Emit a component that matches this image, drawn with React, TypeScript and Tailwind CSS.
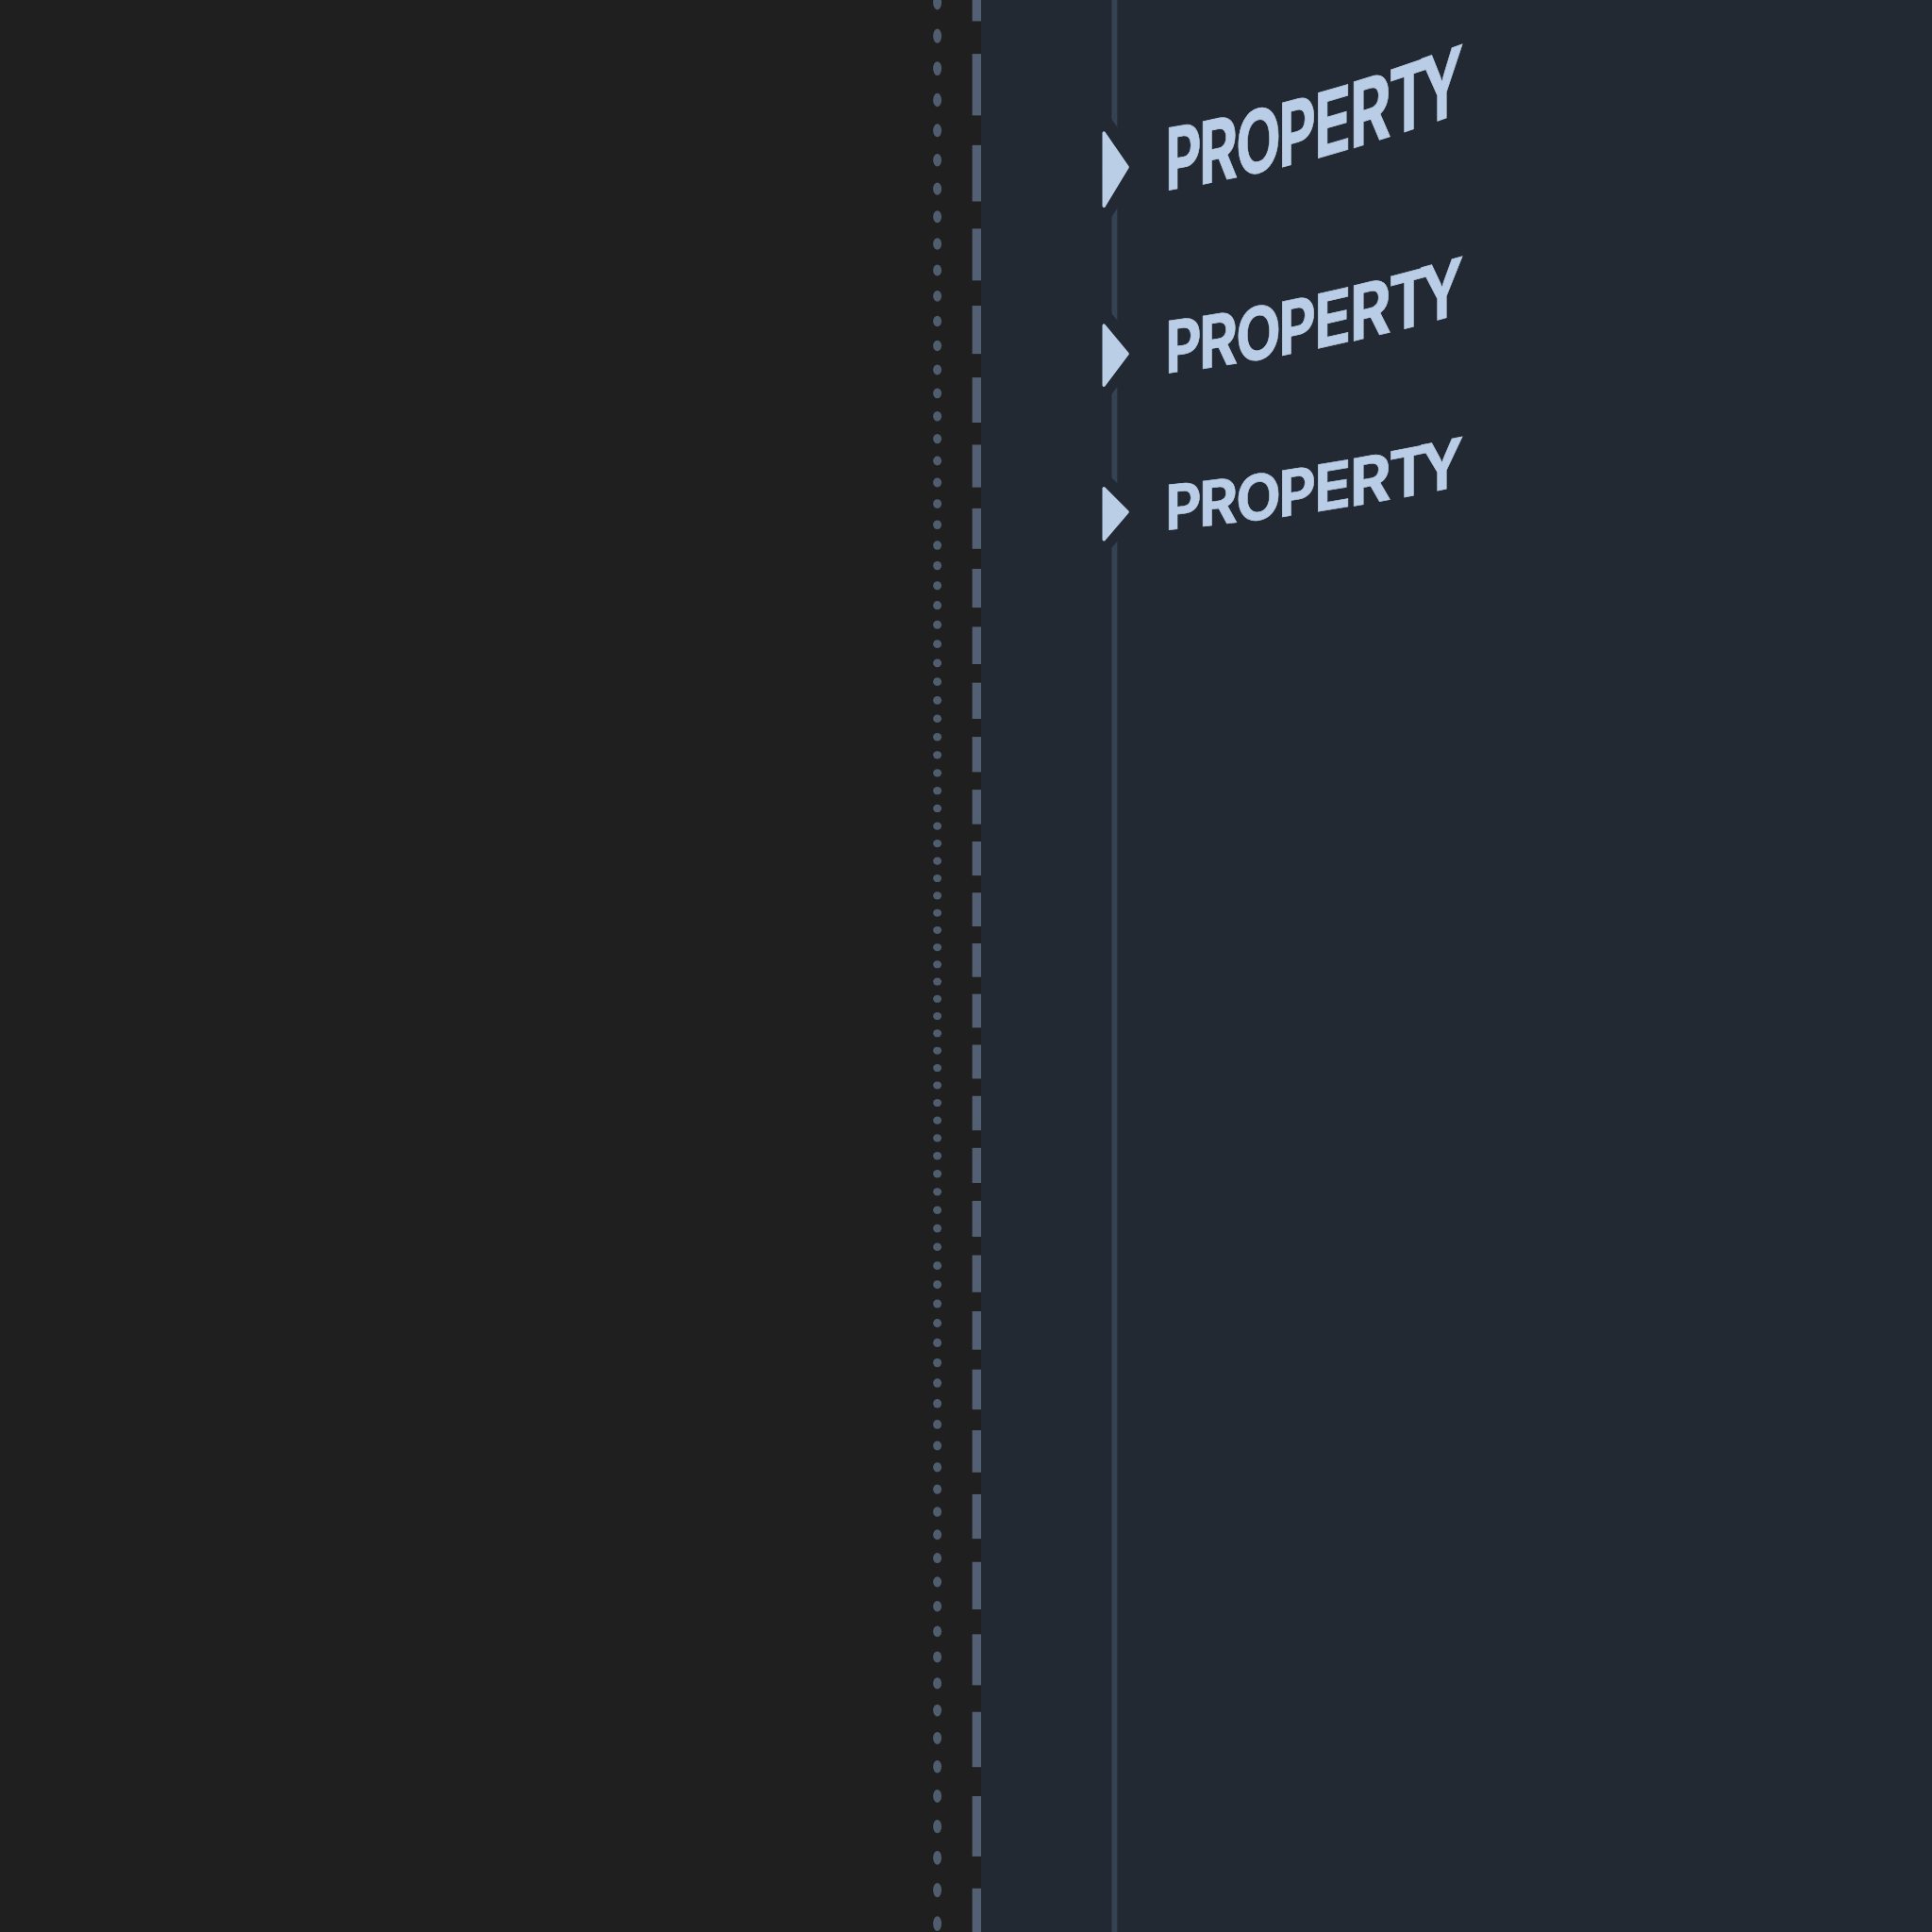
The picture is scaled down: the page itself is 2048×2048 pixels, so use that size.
import React from "react";

/* The scene is a cylinder seen from its axis, projected on a flat square. */
const CENTER = 1024;
const RADIUS = 1024;
const SIZE = 2048;

const project = (angle: number) => CENTER + RADIUS * Math.tan(angle);
const flare = (x: number) => Math.sqrt(1 + ((x - CENTER) / RADIUS) ** 2);
const heightAt = (x: number, level: number) => CENTER - level * flare(x);

const FONT_SIZE = 66;
const BASELINE = 0.8638 * FONT_SIZE;
const CAP_HEIGHT = 0.727 * FONT_SIZE;

const GLYPHS = [
  { char: "P", from: 1239.4, to: 1272.8 },
  { char: "R", from: 1275.1, to: 1311.4 },
  { char: "O", from: 1311.8, to: 1355.6 },
  { char: "P", from: 1359, to: 1393.6 },
  { char: "E", from: 1397.2, to: 1429.6 },
  { char: "R", from: 1434.8, to: 1473.6 },
  { char: "T", from: 1473.7, to: 1513 },
  { char: "Y", from: 1506.5, to: 1551.4 },
];

const ROWS = [
  { top: 0, box: "h-[220px]", base: 805, cap: 869.4, marker: [138, 177.1, 221.3], gap: [25, 24] },
  { top: 220, box: "h-[190px]", base: 615.2, cap: 669.2, marker: [342, 375.1, 411.3], gap: [21, 19] },
  { top: 410, box: "h-[190px]", base: 452.7, cap: 499.2, marker: [514.6, 542.7, 574.8], gap: [18, 17] },
];

const pen = document.createElement("canvas").getContext("2d")!;

/* Measured at a large size, so that rounding to whole pixels does not show. */
function inkOf(char: string) {
  pen.font = "700 1000px Inter";
  const m = pen.measureText(char);
  const unit = FONT_SIZE / 1000;
  return { left: -m.actualBoundingBoxLeft * unit, right: m.actualBoundingBoxRight * unit };
}

function Word({ row }: { row: (typeof ROWS)[number] }) {
  return (
    <div className={`flex shrink-0 ${row.box}`}>
      {GLYPHS.map((g, i) => {
        const ink = inkOf(g.char);
        const sx = (g.to - g.from) / (ink.right - ink.left);
        const mid = (g.from + g.to) / 2;
        const sy = ((row.cap - row.base) * flare(mid)) / CAP_HEIGHT;
        const level = (row.base + row.cap) / 2;
        const slope = (heightAt(g.to, level) - heightAt(g.from, level)) / (g.to - g.from);
        const shear = slope * sx;
        const tx = -ink.left * sx;
        const ty =
          heightAt(mid, row.base) - slope * (mid - g.from) - row.top - BASELINE - ink.left * shear;
        const next = GLYPHS[i + 1];
        return (
          <span
            key={i}
            className="block shrink-0 text-[66px] leading-[66px] [-webkit-text-stroke:0.6px_#b9cde6]"
            style={{
              width: (next ? next.from : g.to) - g.from,
              transformOrigin: `0 ${BASELINE}px`,
              transform: `matrix(${sx}, ${shear}, 0, ${sy}, ${tx}, ${ty})`,
            }}
          >
            {g.char}
          </span>
        );
      })}
    </div>
  );
}

function Dots() {
  return (
    <svg className="block h-full w-[12px] shrink-0" viewBox={`0 0 12 ${SIZE}`}>
      {Array.from({ length: 91 }, (_, i) => {
        const angle = -0.0016 + 0.017787 * (i - 45);
        return (
          <ellipse
            key={i}
            cx={5.6}
            cy={project(angle)}
            rx={4.5}
            ry={4 / Math.cos(angle) ** 2}
            fill="#505d6f"
          />
        );
      })}
    </svg>
  );
}

function Dashes() {
  return (
    <svg className="block h-full w-[10px] shrink-0" viewBox={`0 0 10 ${SIZE}`}>
      {Array.from({ length: 31 }, (_, i) => {
        const angle = -0.0234 + 0.05238 * (i - 15);
        const y = project(angle);
        return (
          <rect key={i} x={0.6} y={y} width={9.4} height={project(angle + 0.0348) - y} fill="#536073" />
        );
      })}
    </svg>
  );
}

function Timeline() {
  return (
    <svg className="block h-full w-[40px] shrink-0" viewBox={`0 0 40 ${SIZE}`}>
      <rect x={18.4} y={0} width={6} height={SIZE} fill="#344252" />
      {ROWS.map(({ marker: [a, b, c], gap: [up, down] }) => (
        <g key={a}>
          <polygon
            points={`8.5,${a - up} 37,${b - up} 37,${b + down} 8.5,${c + down}`}
            fill="#222933"
          />
          <polygon
            points={`10.2,${a + 3} 35.2,${b} 10.2,${c - 3}`}
            fill="#bacee6"
            stroke="#bacee6"
            strokeWidth={3.4}
            strokeLinejoin="round"
          />
        </g>
      ))}
    </svg>
  );
}

export default function App() {
  return (
    <div className="flex h-[2048px] w-[2048px] overflow-hidden bg-[#1f1f1f] font-['Inter',sans-serif] font-bold text-[#b9cde6]">
      <aside className="flex w-[1040px] shrink-0 justify-end">
        <Dots />
        <div className="w-[30px] shrink-0" />
        <Dashes />
      </aside>
      <main className="flex min-w-0 flex-1 bg-[#222933] pl-[120px]">
        <Timeline />
        <div className="flex flex-col pl-[39.4px]">
          {ROWS.map((row) => (
            <Word key={row.top} row={row} />
          ))}
        </div>
      </main>
    </div>
  );
}
